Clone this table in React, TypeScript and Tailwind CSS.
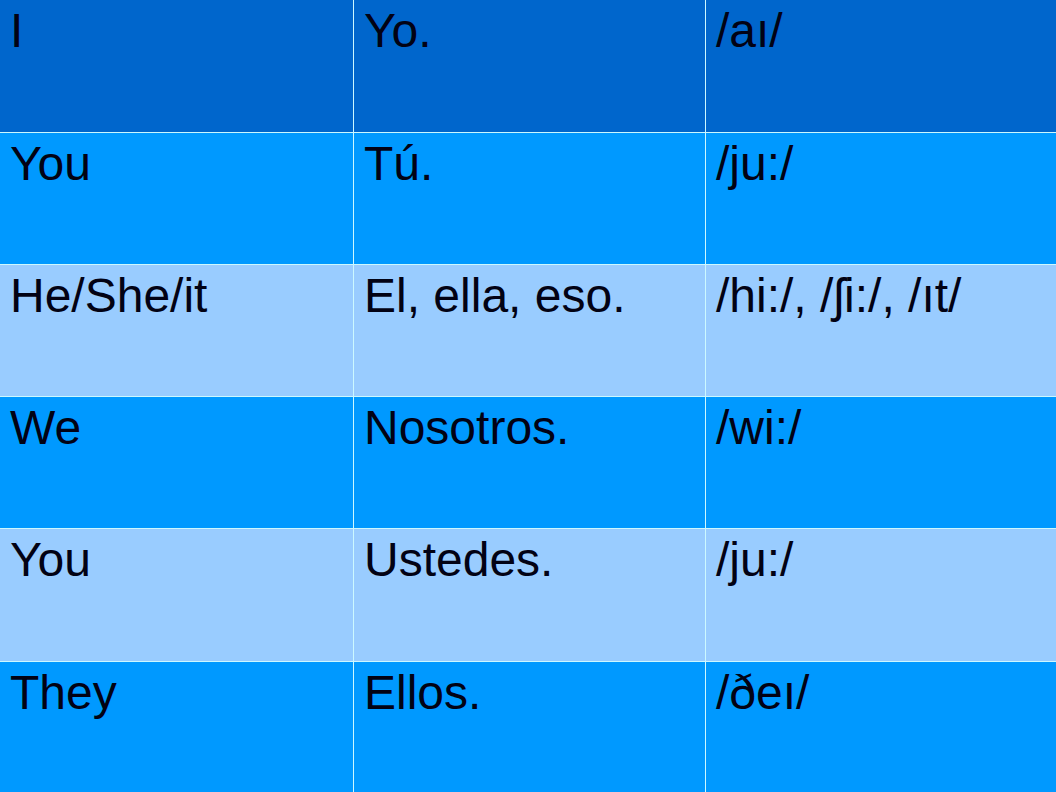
import React from "react";

interface Row {
  english: string;
  spanish: string;
  ipa: string;
  bg: string;
}

const rows: Row[] = [
  { english: "I", spanish: "Yo.", ipa: "/aı/", bg: "bg-[#0066cc]" },
  { english: "You", spanish: "Tú.", ipa: "/ju:/", bg: "bg-[#0099ff]" },
  { english: "He/She/it", spanish: "El, ella, eso.", ipa: "/hi:/, /ʃi:/, /ıt/", bg: "bg-[#99ccff]" },
  { english: "We", spanish: "Nosotros.", ipa: "/wi:/", bg: "bg-[#0099ff]" },
  { english: "You", spanish: "Ustedes.", ipa: "/ju:/", bg: "bg-[#99ccff]" },
  { english: "They", spanish: "Ellos.", ipa: "/ðeı/", bg: "bg-[#0099ff]" },
];

const Cell: React.FC<{ text: string; bg: string }> = ({ text, bg }) => (
  <div className={`${bg} pl-[10px] pt-[3px] text-[48px] leading-[55px] text-[#020214]`}>
    {text}
  </div>
);

const App: React.FC = () => {
  return (
    <div
      className="grid h-[792px] w-[1056px] grid-cols-[353px_351px_350px] grid-rows-[132px_131px_131px_131px_132px_1fr] gap-px overflow-hidden bg-[#ccf8ff]"
      style={{ fontFamily: '"Liberation Sans", Arial, "DejaVu Sans", sans-serif' }}
    >
      {rows.map((row, i) => (
        <React.Fragment key={i}>
          <Cell text={row.english} bg={row.bg} />
          <Cell text={row.spanish} bg={row.bg} />
          <Cell text={row.ipa} bg={row.bg} />
        </React.Fragment>
      ))}
    </div>
  );
};

export default App;
